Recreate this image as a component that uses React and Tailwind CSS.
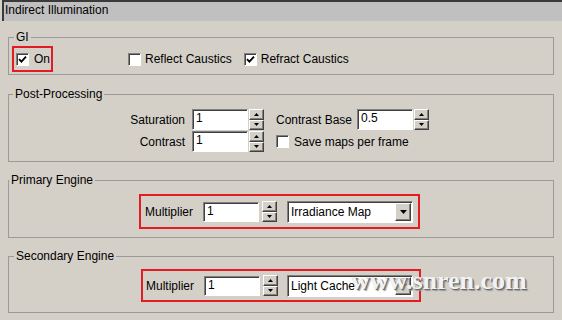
import React from "react";

function Check({ checked }) {
  return (
    <span className="inline-flex h-[13px] w-[13px] shrink-0 items-center justify-center border border-t-[#808080] border-l-[#808080] border-b-white border-r-white bg-white shadow-[inset_1px_1px_0_#404040]">
      {checked && (
        <svg width="9" height="9" viewBox="0 0 9 9">
          <path d="M1 4.2 L3.4 6.6 L8 1.6" fill="none" stroke="#000" strokeWidth="1.8" />
        </svg>
      )}
    </span>
  );
}

function Field({ value, h = "h-[21px]" }) {
  return (
    <div className={`${h} w-[56px] shrink-0 border border-t-[#808080] border-l-[#808080] border-b-white border-r-white bg-white pl-[3px] leading-[17px] shadow-[inset_1px_1px_0_#404040]`}>
      {value}
    </div>
  );
}

function Arrow({ up }) {
  return (
    <svg width="5" height="3" viewBox="0 0 5 3">
      <path d={up ? "M2.5 0 L5 3 L0 3 Z" : "M0 0 L5 0 L2.5 3 Z"} fill="#000" />
    </svg>
  );
}

function Spin() {
  return (
    <div className="flex h-[21px] w-[15px] shrink-0 flex-col">
      <div className="flex flex-1 items-center justify-center border border-t-white border-l-white border-b-[#404040] border-r-[#404040] bg-[#d4d0c8] shadow-[inset_-1px_-1px_0_#808080]">
        <Arrow up />
      </div>
      <div className="flex flex-1 items-center justify-center border border-t-white border-l-white border-b-[#404040] border-r-[#404040] bg-[#d4d0c8] shadow-[inset_-1px_-1px_0_#808080]">
        <Arrow />
      </div>
    </div>
  );
}

function Combo({ value }) {
  return (
    <div className="flex h-[22px] w-[126px] shrink-0 items-center justify-between border border-t-[#808080] border-l-[#808080] border-b-white border-r-white bg-white pl-[3px] pr-px shadow-[inset_1px_1px_0_#404040]">
      <span>{value}</span>
      <div className="flex h-[18px] w-[16px] items-center justify-center border border-t-white border-l-white border-b-[#404040] border-r-[#404040] bg-[#d4d0c8] shadow-[inset_-1px_-1px_0_#808080]">
        <svg width="7" height="4" viewBox="0 0 7 4">
          <path d="M0 0 L7 0 L3.5 4 Z" fill="#000" />
        </svg>
      </div>
    </div>
  );
}

function Group({ title, legendClass, className, children }) {
  return (
    <fieldset className={`ml-[8px] w-[546px] border border-[#9a9a9a] ${className}`}>
      <legend className={`px-[2px] leading-[14px] ${legendClass}`}>{title}</legend>
      {children}
    </fieldset>
  );
}

function EngineRow({ value, boxClass, gapSpin, gapCombo }) {
  return (
    <div className={`flex items-center border-2 border-[#e31b23] ${boxClass}`}>
      <span className="w-[48px]">Multiplier</span>
      <div className="ml-[10px] flex items-center">
        <Field value="1" h="h-[20px]" />
        <div className={gapSpin}>
          <Spin />
        </div>
      </div>
      <div className={gapCombo}>
        <Combo value={value} />
      </div>
    </div>
  );
}

export default function App() {
  return (
    <div className="relative h-[320px] w-[562px] overflow-hidden bg-[#d4d0c8] font-['Liberation_Sans',Arial,sans-serif] text-[12px] text-black">
      <div className="ml-[2px] h-[21px] border-t-2 border-l-2 border-[#3a3a3a] bg-[#c0c0c0] pl-[1px] leading-[17px]">
        Indirect Illumination
      </div>

      <Group title="GI" legendClass="ml-[5px]" className="mt-[9px] h-[45px]">
        <div className="mt-[2px] flex items-center">
          <div className="ml-[3px] flex h-[26px] items-center gap-[5px] border-2 border-[#e31b23] pl-[2px] pr-[1px]">
            <Check checked />
            <span>On</span>
          </div>
          <div className="ml-[75px] flex items-center gap-[4px]">
            <Check />
            <span>Reflect Caustics</span>
          </div>
          <div className="ml-[12px] flex items-center gap-[4px]">
            <Check checked />
            <span>Refract Caustics</span>
          </div>
        </div>
      </Group>

      <Group title="Post-Processing" legendClass="ml-[4px]" className="mt-[12px] h-[75px]">
        <div className="flex pl-[106px] pt-[8px]">
          <div className="flex flex-col gap-px">
            <div className="flex items-center">
              <span className="w-[70px] text-right">Saturation</span>
              <div className="ml-[7px]"><Field value="1" /></div>
              <div className="ml-px"><Spin /></div>
            </div>
            <div className="flex items-center">
              <span className="w-[70px] text-right">Contrast</span>
              <div className="ml-[7px]"><Field value="1" /></div>
              <div className="ml-px"><Spin /></div>
            </div>
          </div>
          <div className="ml-[12px] flex flex-col gap-px">
            <div className="flex items-center">
              <span className="shrink-0 whitespace-nowrap">Contrast Base</span>
              <div className="ml-[5px]"><Field value="0.5" /></div>
              <div className="ml-px"><Spin /></div>
            </div>
            <div className="flex h-[21px] items-center gap-[5px]">
              <Check />
              <span className="whitespace-nowrap">Save maps per frame</span>
            </div>
          </div>
        </div>
      </Group>

      <Group title="Primary Engine" legendClass="ml-0" className="mt-[11px] h-[65px]">
        <div className="pt-[7px] pl-[130px]">
          <EngineRow
            value="Irradiance Map"
            boxClass="h-[35px] w-[281px] pl-[4px]"
            gapSpin="ml-[3px]"
            gapCombo="ml-[10px]"
          />
        </div>
      </Group>

      <Group title="Secondary Engine" legendClass="ml-[5px]" className="mt-[11px] h-[64px]">
        <div className="pt-[6px] pl-[132px]">
          <EngineRow
            value="Light Cache"
            boxClass="h-[33px] w-[280px] pl-[3px]"
            gapSpin="ml-[3px]"
            gapCombo="ml-[9px]"
          />
        </div>
      </Group>

      <div className="absolute left-[351px] top-[268px] font-['Liberation_Serif',serif] text-[26px] font-bold leading-none text-[#f2f2f2] [text-shadow:1px_1px_0_#6a6a6a,2px_2px_1px_#9a9a9a]">
        www.snren.com
      </div>
    </div>
  );
}
